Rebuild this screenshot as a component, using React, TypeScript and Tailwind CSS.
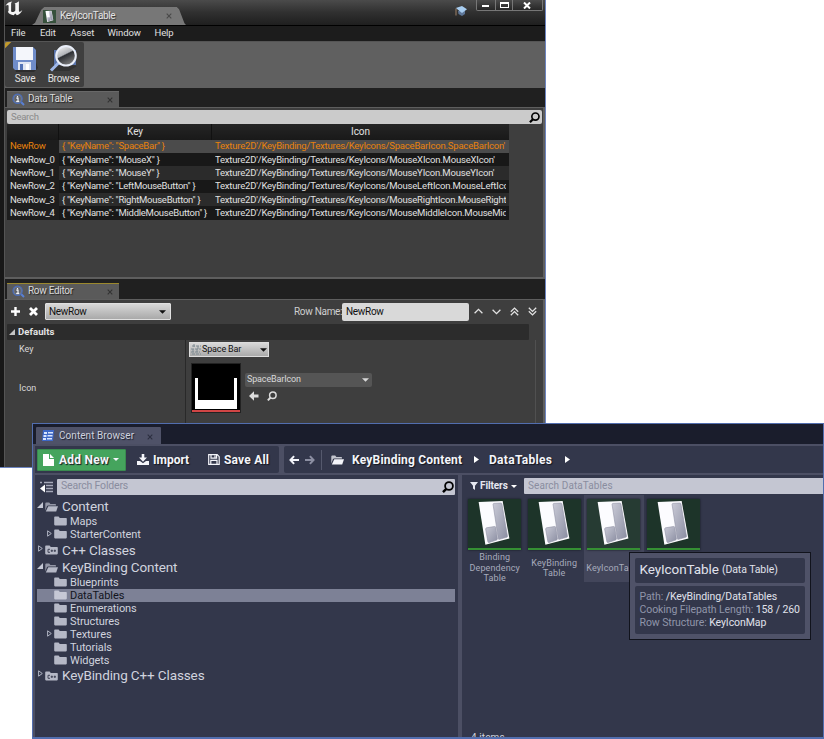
import React from "react";

type IconProps = { className?: string };

function UnrealLogo() {
  return (
    <svg className="h-[16px] w-[19px]" viewBox="0 0 19 16" fill="#f4f4f4">
      <path d="M0.5 5.8C1.8 3.2 4 1.8 7.3 1.4C6.4 2.2 6.1 2.9 6.1 4V10.6C6.1 11.6 6.6 12.1 7.4 12.1C8.4 12.1 9.6 11.4 10.3 10.5V4.6C10.3 3.9 9.9 3.5 9.1 3.5C10.7 3.2 12.6 2.4 13.9 1.3V10.4C13.9 11.4 14.3 11.9 15 11.7C15.8 11.5 16.6 11 17.3 10.1C16.4 12.8 14.6 14.6 11.9 15.2L10.2 13.5L8.7 15.3C5.7 15.1 3.6 13.8 2.8 11.6C3.3 11.7 3.6 11.3 3.6 10.6V5.8C3.6 4.6 2 4.6 0.5 5.8Z" />
    </svg>
  );
}

function TableGlyph({ className }: IconProps) {
  return (
    <svg className={className} viewBox="0 0 53 51">
      <defs>
        <linearGradient id="slab" x1="0" y1="0" x2="1" y2="1">
          <stop offset="0" stopColor="#c9cad6" />
          <stop offset="1" stopColor="#8b8ea2" />
        </linearGradient>
      </defs>
      <path d="M11 4L35.5 2L42 41L18 47.5Z" fill="#17221d" opacity=".6" />
      <path d="M10 3.2L35 2.2L42 41L17 47.5Z" fill="#fcfcff" />
      <path d="M25 5.5Q25 4.7 26 4.6L33 4.2Q34 4.2 34.2 5L40 38.6Q40.1 39.6 39.3 39.8L31.5 42Q30.6 42.2 30.4 41.2Z" fill="url(#slab)" stroke="#8d90a3" strokeWidth=".6" />
      <path d="M17.3 31.5Q17.2 30.3 18.2 30L26.5 28.6Q27.6 28.5 27.8 29.5L29.5 41.2Q29.6 42.3 28.7 42.7L21 45.3Q19.9 45.5 19.6 44.4Z" fill="url(#slab)" stroke="#8d90a3" strokeWidth=".6" />
    </svg>
  );
}

function InfoLens() {
  return (
    <svg className="h-[13px] w-[13px] shrink-0" viewBox="0 0 13 13">
      <path d="M8.8 8.8L12 12" stroke="#5a80d2" strokeWidth="2" />
      <circle cx="5.6" cy="5.8" r="4.6" fill="#7c8088" stroke="#4a6cb8" strokeWidth="1.3" />
      <circle cx="5.6" cy="5.8" r="3.2" fill="#5c6068" />
      <path d="M4.3 5.2H6V8.3M4.2 8.4H7.2M5.5 2.9V4.2" stroke="#f0f2f6" strokeWidth="1.2" fill="none" />
    </svg>
  );
}

function Lens({ className }: IconProps) {
  return (
    <svg className={className} viewBox="0 0 12 12" fill="none" stroke="currentColor" strokeWidth="1.8">
      <circle cx="7" cy="5" r="3.9" />
      <path d="M4.3 7.8L1 11.2" strokeWidth="2.4" />
    </svg>
  );
}

function Caret({ className }: IconProps) {
  return (
    <svg className={className} viewBox="0 0 8 4" fill="currentColor">
      <path d="M0 0H8L4 4Z" />
    </svg>
  );
}

function CloseX({ className }: IconProps) {
  return (
    <svg className={className} viewBox="0 0 6 6" fill="none" stroke="currentColor" strokeWidth="1.1">
      <path d="M.7 .7L5.3 5.3M5.3 .7L.7 5.3" />
    </svg>
  );
}

function ArrowLeft({ className }: IconProps) {
  return (
    <svg className={className} viewBox="0 0 11 10" fill="none" stroke="currentColor" strokeWidth="2.2">
      <path d="M5.6 .7L1.6 5L5.6 9.3M1.8 5H11" />
    </svg>
  );
}

function FolderIcon({ open, cpp, className }: { open?: boolean; cpp?: boolean; className?: string }) {
  return (
    <svg className={`h-[10px] w-[13px] shrink-0 ${className ?? ""}`} viewBox="0 0 13 10" fill="currentColor">
      {open ? (
        <>
          <path d="M.3 8.5V1.6Q.3 .6 1.3 .6H4.2L5.4 1.9H10.2Q11 1.9 11 2.7V3.4H3.2Q2.4 3.4 2 4.1Z" opacity=".75" />
          <path d="M3.3 4.2H13L11.2 9.4H.8Z" />
        </>
      ) : (
        <path d="M.2 1.3Q.2 .6 1 .6H4.6L5.8 1.9H12Q12.8 1.9 12.8 2.6V8.6Q12.8 9.4 12 9.4H1Q.2 9.4 .2 8.6Z" />
      )}
      {cpp && (
        <path d="M5 4.3H3V7.3H5M5.7 5.8H8M6.85 4.6V7M8.7 5.8H11M9.85 4.6V7" fill="none" stroke="#33374b" strokeWidth=".9" />
      )}
    </svg>
  );
}

function Chevron({ flip, twice }: { flip?: boolean; twice?: boolean }) {
  return (
    <svg className={`h-[9px] w-[9px] ${flip ? "rotate-180" : ""}`} viewBox="0 0 9 9" fill="none" stroke="#e2e2e2" strokeWidth="1.3">
      {twice ? <path d="M.8 4.8L4.5 1.1L8.2 4.8M.8 8.3L4.5 4.6L8.2 8.3" /> : <path d="M.6 6.3L4.5 2.4L8.4 6.3" />}
    </svg>
  );
}

function MenuBar() {
  return (
    <div className="flex h-[16px] items-center border-t border-black bg-[#1c1c1c] pl-[6px] text-[9.5px] tracking-[-.1px] text-[#e0e0e0]">
      <span className="w-[29px]">File</span>
      <span className="w-[30.5px]">Edit</span>
      <span className="w-[37px]">Asset</span>
      <span className="w-[47px]">Window</span>
      <span>Help</span>
    </div>
  );
}

function TitleBar() {
  return (
    <div className="flex h-[25px] bg-linear-to-b from-[#4b4b4b] via-[#303030] to-[#1f1f1f]">
      <div className="w-[27px] shrink-0"><UnrealLogo /></div>
      <div className="mt-[7px] h-[18px] w-[154px] bg-[#777] pl-[11px] [clip-path:polygon(0_100%,2%_88%,6%_15%,8%_0,94%_0,95.5%_12%,99%_90%,100%_100%)]">
        <div className="flex h-[18px] items-center">
          <div className="h-[13px] w-[13px] bg-[#36513c]"><TableGlyph className="h-[13px] w-[13px]" /></div>
          <span className="ml-[4px] w-[106px] pb-px text-[10px] tracking-[-.35px] text-[#e4e4e4] [text-shadow:1px_1px_1px_#333]">KeyIconTable</span>
          <CloseX className="h-[6px] w-[6px] text-[#494949]" />
        </div>
      </div>
      <div className="grow" />
      <svg className="mt-[5px] mr-[8px] h-[13px] w-[13px]" viewBox="0 0 13 13">
        <path d="M3 6L10 6V9L7 11L3.5 9Z" fill="#5e7799" />
        <path d="M.8 3L7 1L12 4.2L7 8Z" fill="#a8cdf0" />
        <path d="M1 3.5V10.5" stroke="#87705c" strokeWidth="1.3" />
      </svg>
      <div className="mr-[2px] flex h-[11px] w-[67px] rounded-b-[2px] border-x border-b border-[#777] bg-linear-to-b from-[#4a4a4a] to-[#272727] text-white">
        <div className="flex w-[19px] items-center justify-center border-r border-[#777] pr-[2px]"><i className="mt-px h-[2px] w-[7px] bg-white" /></div>
        <div className="flex w-[17px] items-center justify-center border-r border-[#777]"><i className="h-[6px] w-[9px] border border-t-2 border-white" /></div>
        <div className="flex grow items-center justify-center pr-[2px]">
          <svg className="h-[7px] w-[8px]" viewBox="0 0 8 7" stroke="white" strokeWidth="2"><path d="M1 .5L7 6.5M7 .5L1 6.5" /></svg>
        </div>
      </div>
    </div>
  );
}

function Toolbar() {
  return (
    <div className="flex h-[47px] border-t border-[#555] bg-[#606060]">
      <div className="flex h-[45px] w-[79px] rounded-[2px] bg-[#3f3f3f] bg-linear-[135deg,#c19a2c_4px,#3f3f3f_5px] text-[10px] tracking-[-.25px] text-[#e2e2e2]">
        <div className="flex w-[40px] flex-col items-center pt-[4px]">
          <svg className="h-[27px] w-[26px]" viewBox="0 0 26 27">
            <path d="M3 22L20 4L26 22L22 26H4Z" fill="#1c1c1c" opacity=".5" />
            <path d="M1 1H21L24 4V24H3L1 22Z" fill="#6f8cc9" />
            <path d="M4 1H21V14H4Z" fill="#f4f6fb" />
            <path d="M6 16H19V24H6Z" fill="#dfe5f2" />
            <path d="M8 18H11V24H8Z" fill="#5373b6" />
            <path d="M14 18H17V24H14Z" fill="#fff" />
          </svg>
          <span className="leading-[12px]">Save</span>
        </div>
        <div className="flex w-[37px] flex-col items-center pt-[2px]">
          <svg className="h-[29px] w-[29px]" viewBox="0 0 29 29">
            <defs>
              <linearGradient id="glass" x1="0" y1="0" x2=".5" y2="1">
                <stop offset="0" stopColor="#fff" /><stop offset=".5" stopColor="#b0b3b8" /><stop offset=".56" stopColor="#2c2f34" /><stop offset="1" stopColor="#777" />
              </linearGradient>
            </defs>
            <path d="M4 6H16V20L28 22L20 27H5Z" fill="#252525" opacity=".5" />
            <path d="M5 6H27V21H5Z" fill="#5a74ab" />
            <path d="M9.5 19L2 26.5" stroke="#9fb8ea" strokeWidth="3" />
            <circle cx="17" cy="11.8" r="9.8" fill="url(#glass)" stroke="#e9eef8" strokeWidth="2" />
          </svg>
          <span className="leading-[12px]">Browse</span>
        </div>
      </div>
    </div>
  );
}

function DockTab({ label, active }: { label: string; active?: boolean }) {
  return (
    <div className={`ml-[2px] flex h-[16px] w-[112px] items-center border-t bg-[#5a5a5a] pl-[5px] ${active ? "border-[#9b882d]" : "border-[#686868]"}`}>
      <InfoLens />
      <span className="ml-[3px] w-[79px] pb-[2px] text-[10px] tracking-[-.3px] text-[#dadada] [text-shadow:1px_1px_1px_#222]">{label}</span>
      <CloseX className="h-[6px] w-[6px] shrink-0 text-[#333]" />
    </div>
  );
}

const rows = [
  ["NewRow", "SpaceBar", "SpaceBarIcon.SpaceBarIcon'"],
  ["NewRow_0", "MouseX", "MouseXIcon.MouseXIcon'"],
  ["NewRow_1", "MouseY", "MouseYIcon.MouseYIcon'"],
  ["NewRow_2", "LeftMouseButton", "MouseLeftIcon.MouseLeftIcon'"],
  ["NewRow_3", "RightMouseButton", "MouseRightIcon.MouseRightIcon'"],
  ["NewRow_4", "MiddleMouseButton", "MouseMiddleIcon.MouseMiddleIcon'"],
];

function DataTable() {
  return (
    <div className="h-[172px] border-t border-r-2 border-b-2 border-[#5e5e5e] bg-[#3e3e3e] pt-[2px] pl-[2px]">
      <div className="mr-px flex h-[14px] items-center rounded-[2px] bg-[#cbcbcb] pr-[2px] pl-[4px]">
        <span className="grow text-[9.5px] tracking-[-.25px] text-[#8a8a8a]">Search</span>
        <Lens className="h-[11px] w-[11px] text-black" />
      </div>
      <div className="w-[502px] text-[9.5px] text-[#e0e0e0]">
        <div className="flex h-[15.8px] items-center bg-linear-to-b from-[#252525] to-[#191919] text-center text-[10px] tracking-[-.1px]">
          <span className="h-full w-[52px] border-r border-[#111]" />
          <span className="h-full w-[153px] border-r border-[#111] leading-[16px]">Key</span>
          <span className="h-full grow leading-[16px]">Icon</span>
        </div>
        {rows.map(([name, key, icon], i) => (
          <div key={name} className={`flex h-[13.33px] items-center whitespace-pre ${i === 0 ? "text-[#e8820c]" : ""}`}>
            <span className="flex h-full w-[52px] items-center bg-[#1d1d1d] pl-[3px] tracking-[-.3px]">{name}</span>
            <div className={`flex h-full w-[450px] items-center ${i === 0 ? "bg-[#4b4b4b]" : i % 2 ? "bg-[#181818]" : "bg-[#2b2b2b]"}`}>
              <span className="w-[156px] pl-[3px] tracking-[-.25px]">{`{ "KeyName": "${key}" }`}</span>
              <span className="w-[291px] overflow-hidden tracking-[-.2px]">{`Texture2D'/KeyBinding/Textures/KeyIcons/${icon}`}</span>
            </div>
          </div>
        ))}
      </div>
    </div>
  );
}

function RowEditor() {
  return (
    <div className="flex grow flex-col border-t border-r-2 border-[#5e5e5e] bg-[#3e3e3e] pl-[2px]">
      <div className="flex h-[24px] items-center pb-px pl-[4px] text-[10px] tracking-[-.3px]">
        <svg className="h-[9px] w-[9px]" viewBox="0 0 9 9" stroke="white" strokeWidth="2.4"><path d="M4.5 0V9M0 4.5H9" /></svg>
        <svg className="ml-[9px] h-[9px] w-[9px]" viewBox="0 0 9 9" stroke="white" strokeWidth="2.8"><path d="M1 1L8 8M8 1L1 8" /></svg>
        <div className="ml-[7px] flex h-[17px] w-[126px] items-center rounded-[1px] border border-[#e0e0e0] bg-linear-to-b from-[#d8d8d8] to-[#a9a9a9] pl-[3px] text-[#111]">
          <span className="w-[110px]">NewRow</span>
          <Caret className="h-[4px] w-[7px]" />
        </div>
        <span className="ml-[123px] w-[48px] shrink-0 whitespace-nowrap text-[#cfcfcf]">Row Name:</span>
        <div className="flex h-[18px] w-[127px] shrink-0 items-center rounded-[2px] bg-[#d9d9d9] pl-[4px] text-[#111]">NewRow</div>
        <div className="ml-[5px] flex gap-[9px]">
          <Chevron /><Chevron flip /><Chevron twice /><Chevron twice flip />
        </div>
      </div>
      <div className="flex h-[16px] w-[522px] items-center rounded-[1px] bg-[#2c2c2c] text-[9.5px] font-bold tracking-[.1px] text-[#e4e4e4]">
        <svg className="mr-[3px] mb-px ml-[2px] h-[6px] w-[6px]" viewBox="0 0 6 6" fill="#c4c4c4"><path d="M6 0V6H0Z" /></svg>
        Defaults
      </div>
      <div className="flex grow text-[9px] text-[#d8d8d8]">
        <div className="w-[179px] border-r border-[#292929] pt-[3px] pl-[12px]">
          <div className="h-[39px] leading-[12px]">Key</div>
          <div className="leading-[12px]">Icon</div>
        </div>
        <div className="w-[344px] pt-[2px] pl-[3px]">
          <div className="flex h-[15px] w-[80px] items-center border border-[#ddd] bg-linear-to-b from-[#d9d9d9] to-[#aaa] tracking-[-.15px] text-[#111]">
            <svg className="h-[12px] w-[12px]" viewBox="0 0 12 12" fill="none" stroke="#7f8b92">
              <path d="M2 2H11M1 5H11M1 8H10M4 0V4M8 2V5M3 5V8M7 5V8M2 10H11" strokeDasharray="3 1" />
            </svg>
            <span className="w-[58px]">Space Bar</span>
            <Caret className="h-[4px] w-[7px] shrink-0" />
          </div>
          <div className="mt-[6px] ml-[2px] flex">
            <div className="flex h-[50px] w-[50px] flex-col border border-[#222] bg-black">
              <div className="flex grow items-end px-[3px] pt-[14px]">
                <div className="h-[31px] w-full border-x-[3px] border-b-[9px] border-white" />
              </div>
              <div className="mt-px h-[2px] bg-[#d04545]" />
            </div>
            <div className="ml-[4px] pt-[10px]">
              <div className="flex h-[14px] w-[127px] items-center rounded-[2px] bg-[#555] pl-[2px] tracking-[-.15px]">
                <span className="w-[115px]">SpaceBarIcon</span>
                <Caret className="h-[4px] w-[7px] shrink-0" />
              </div>
              <div className="mt-[4px] ml-[4px] flex items-center gap-[8px] text-[#ddd]">
                <svg className="h-[10px] w-[10px]" viewBox="0 0 10 10" fill="currentColor"><path d="M0 5L5 .3V3.4H9.5V6.6H5V9.7Z" /></svg>
                <Lens className="h-[10px] w-[10px]" />
              </div>
            </div>
          </div>
        </div>
        <div className="ml-[5px] w-px bg-[#505050]" />
      </div>
    </div>
  );
}

function AssetEditor() {
  return (
    <div className="absolute top-0 left-0 flex h-[468px] w-[546px] flex-col border-r border-b border-[#6c84c0] bg-[#202020] pl-[4px] shadow-[inset_4px_0_0_#181818,inset_5px_0_0_#555]">
      <div className="pl-px">
        <TitleBar />
        <MenuBar />
        <Toolbar />
        <div className="flex h-[19px] items-end"><DockTab label="Data Table" /></div>
        <DataTable />
        <div className="flex h-[20px] items-end"><DockTab label="Row Editor" active /></div>
      </div>
      <div className="flex grow pl-px"><RowEditor /></div>
    </div>
  );
}

type Node = { label: string; level: 0 | 1; open?: boolean; branch?: boolean; cpp?: boolean; selected?: boolean; h: string };
const tree: Node[] = [
  { label: "Content", level: 0, open: true, h: "h-[17px]" },
  { label: "Maps", level: 1, h: "h-[13px]" },
  { label: "StarterContent", level: 1, branch: true, h: "h-[13px]" },
  { label: "C++ Classes", level: 0, branch: true, cpp: true, h: "h-[18px]" },
  { label: "KeyBinding Content", level: 0, open: true, h: "h-[17px]" },
  { label: "Blueprints", level: 1, h: "h-[13px]" },
  { label: "DataTables", level: 1, selected: true, h: "h-[13px]" },
  { label: "Enumerations", level: 1, h: "h-[13px]" },
  { label: "Structures", level: 1, h: "h-[13px]" },
  { label: "Textures", level: 1, branch: true, h: "h-[13px]" },
  { label: "Tutorials", level: 1, h: "h-[13px]" },
  { label: "Widgets", level: 1, h: "h-[13px]" },
  { label: "KeyBinding C++ Classes", level: 0, branch: true, cpp: true, h: "h-[17px]" },
];

function TreeRow({ label, level, open, branch, cpp, selected, h }: Node) {
  return (
    <div className={`flex items-center ${h} ${level ? "pl-[9px]" : ""} ${selected ? "bg-[#7d8196] text-[#12141d]" : "text-[#d0d3de]"}`}>
      <span className={`flex w-[8px] shrink-0 ${level ? "pb-[3px]" : "pb-[4px]"}`}>
        {open && <svg className="h-[6px] w-[6px]" viewBox="0 0 6 6" fill="#c4c7d4"><path d="M6 0V6H0Z" /></svg>}
        {branch && <svg className="ml-px h-[7px] w-[5px]" viewBox="0 0 5 7" fill="none" stroke="#aeb2c2"><path d="M.6 .8L4.3 3.5L.6 6.2Z" /></svg>}
      </span>
      <FolderIcon open={open} cpp={cpp} className={`${level ? "mb-px" : ""} ${selected ? "text-[#c6c8d5]" : "text-[#b5b8c6]"}`} />
      <span className={level ? "ml-[3px] text-[11px] leading-[13px] tracking-[-.08px]" : "ml-[4px] text-[13.5px] tracking-[-.12px]"}>{label}</span>
    </div>
  );
}

function ContentToolbar() {
  return (
    <div className="flex h-[27px] gap-[5px] text-[12px] font-bold text-[#f4f5fa] [text-shadow:1px_1px_1px_#14161f]">
      <div className="flex w-[244px] items-center rounded-r-[2px] bg-[#33374b] pl-[2px]">
        <div className="flex h-[22px] w-[89px] items-center rounded-[1px] border border-[#3a8b50] bg-[#45a45d] pl-[5px]">
          <svg className="h-[12px] w-[11px]" viewBox="0 0 11 12" fill="white"><path d="M0 0H6V5H11V12H0ZM7 0L11 4H7Z" /></svg>
          <span className="ml-[5px] w-[54px] tracking-[.25px] whitespace-nowrap">Add New</span>
          <Caret className="h-[3px] w-[6px]" />
        </div>
        <svg className="ml-[11px] h-[11px] w-[12px]" viewBox="0 0 12 11" fill="currentColor"><path d="M4.7 0H7.3V3.5H10L6 7.7L2 3.5H4.7ZM0 7H3L6 9.3L9 7H12V11H0Z" /></svg>
        <span className="ml-[4px] w-[55px]">Import</span>
        <svg className="h-[11px] w-[12px]" viewBox="0 0 12 11" fill="none" stroke="currentColor" strokeWidth="1.2"><path d="M.7 .7H9.2L11.2 2.7V10.3H.7ZM3 .8V4.2H8.6V.8M2.8 10V6.4H9V10M7 1.6V3.4" /></svg>
        <span className="ml-[4px] tracking-[.2px]">Save All</span>
      </div>
      <div className="flex grow items-center rounded-l-[2px] bg-[#33374b] pl-[5px]">
        <ArrowLeft className="h-[10px] w-[10px]" />
        <ArrowLeft className="ml-[6px] h-[10px] w-[10px] rotate-180 text-[#8c8fa2]" />
        <i className="ml-[6px] h-[20px] w-px bg-[#55596d]" />
        <FolderIcon open className="ml-[9px]" />
        <span className="ml-[8px] w-[122px] tracking-[.2px] whitespace-nowrap">KeyBinding Content</span>
        <svg className="h-[7px] w-[5px]" viewBox="0 0 5 7" fill="white"><path d="M0 0L5 3.5L0 7Z" /></svg>
        <span className="ml-[10px] w-[76px] tracking-[.3px]">DataTables</span>
        <svg className="h-[7px] w-[5px]" viewBox="0 0 5 7" fill="white"><path d="M0 0L5 3.5L0 7Z" /></svg>
      </div>
    </div>
  );
}

const assets = [
  { lines: ["Binding", "Dependency", "Table"] },
  { lines: ["KeyBinding", "Table"] },
  { lines: ["KeyIconTable"], hover: true },
  { lines: [] },
];

function AssetCard({ lines, hover }: { lines: string[]; hover?: boolean }) {
  return (
    <div className={`flex h-[87px] w-[59.5px] shrink-0 flex-col items-center pt-[4px] ${hover ? "bg-[#43465b]" : ""}`}>
      <div className={`h-[51px] w-[53px] shrink-0 border-b-2 border-[#359033] shadow-[0_0_2px_#151821] ${hover ? "bg-[#263b33]" : "bg-[#1d3429]"}`}>
        <TableGlyph className="h-[49px] w-[53px]" />
      </div>
      <div className="mt-[2px] flex h-[32px] shrink-0 flex-col items-center justify-center text-[9px] leading-[10.5px] tracking-[.12px] text-[#a7abbc]">
        {lines.map((l) => <span key={l}>{l}</span>)}
      </div>
    </div>
  );
}

function Tooltip() {
  return (
    <div className="absolute top-[128px] left-[596px] flex h-[88px] w-[182px] flex-col gap-[3px] border border-[#11131c] bg-[#4f5268] p-[5px] text-[#e0e2ec]">
      <div className="flex h-[25px] items-center rounded-[2px] bg-[#33374b] pb-[2px] pl-[4.5px] whitespace-nowrap">
        <span className="text-[13.5px] tracking-[-.08px]">KeyIconTable</span>
        <span className="mt-px ml-[3px] text-[10.5px] tracking-[-.08px]">(Data Table)</span>
      </div>
      <div className="flex grow flex-col justify-center rounded-[2px] bg-[#33374b] pb-px pl-[4.5px] text-[10.5px] leading-[13px] tracking-[-.08px] whitespace-nowrap">
        <div><span className="text-[#9095a9]">Path: </span>/KeyBinding/DataTables</div>
        <div><span className="text-[#9095a9]">Cooking Filepath Length: </span>158 / 260</div>
        <div><span className="text-[#9095a9]">Row Structure: </span>KeyIconMap</div>
      </div>
    </div>
  );
}

function ContentBrowser() {
  return (
    <div className="absolute top-[423px] left-[32px] flex h-[316px] w-[792px] flex-col border border-b-2 border-[#526eaf] bg-[#4c4f64]">
      <div className="flex h-[21px] shrink-0 items-end border-b border-[#4c4f64] bg-[#1a1d2c]">
        <div className="ml-[3px] flex h-[17px] w-[125px] items-center rounded-t-[1px] bg-[#4f5268] pl-[6px]">
          <svg className="h-[11px] w-[12px]" viewBox="0 0 12 11">
            <path d="M1 0H12L11 11H0Z" fill="#3e68c8" />
            <path d="M2 2H5V4H2ZM6 2H11V3.5H6ZM1.5 5H4.5V7H1.5ZM5.5 5H10.5V6.5H5.5ZM1 8H4V10H1ZM5 8H10V9.5H5Z" fill="#d9e5ff" />
          </svg>
          <span className="ml-[5px] w-[88px] text-[10px] tracking-[.06px] whitespace-nowrap text-[#cfd2de] [text-shadow:1px_1px_1px_#1d2030]">Content Browser</span>
          <CloseX className="mt-[2px] h-[6px] w-[6px] shrink-0 text-[#2c2f40]" />
        </div>
      </div>
      <div className="shrink-0 pt-px pl-[2px]"><ContentToolbar /></div>
      <div className="mt-[2px] flex min-h-0 grow gap-[4px] pl-[2px]">
        <div className="w-[423px] shrink-0 bg-[#33374b] pt-[3px]">
          <div className="flex h-[17px] items-center pr-[3px] pl-[5px]">
            <svg className="h-[12px] w-[13px]" viewBox="0 0 13 12" fill="none" stroke="#a6a9b9" strokeWidth="1.4">
              <path d="M0 1.5H2M4 1.5H13M6 4.5H13M6 7.5H13M6 10.5H13" /><path d="M0 7.5L5 3.5V11.5Z" fill="white" stroke="none" />
            </svg>
            <div className="ml-[4px] flex h-[16px] grow items-center rounded-[1px] bg-[#c4c6d2] pr-[1px] pl-[4px]">
              <span className="grow pb-px text-[10.5px] tracking-[-.18px] text-[#8a8d9f]">Search Folders</span>
              <Lens className="h-[12px] w-[12px] text-black" />
            </div>
          </div>
          <div className="mr-[3px] ml-[2px] pt-[3px]">{tree.map((n) => <TreeRow key={n.label} {...n} />)}</div>
        </div>
        <div className="flex min-w-0 grow flex-col bg-[#33374b] pt-[3px]">
          <div className="flex h-[16px] shrink-0 items-center pl-[8px]">
            <svg className="h-[8px] w-[8px]" viewBox="0 0 8 8" fill="#e6e8f0"><path d="M0 0H8L5 3.8V8L3 6.5V3.8Z" /></svg>
            <span className="ml-[2px] w-[31px] pb-px text-[10px] font-bold tracking-[-.1px] text-[#e6e8f0]">Filters</span>
            <Caret className="h-[3px] w-[6px] text-white" />
            <div className="ml-[7px] flex h-[16px] grow items-center rounded-l-[1px] bg-[#c4c6d2] pb-px pl-[4px] text-[10px] tracking-[.08px] text-[#8a8d9f]">Search DataTables</div>
          </div>
          <div className="mt-px ml-[3px] flex">{assets.map((a, i) => <AssetCard key={i} {...a} />)}</div>
          <div className="mt-auto h-[4px] shrink-0 overflow-hidden pl-[9px] text-[10px] leading-[10px] tracking-[.1px] text-[#d0d3de]">4 items</div>
        </div>
      </div>
      <Tooltip />
    </div>
  );
}

export default function App() {
  return (
    <div className="relative h-[739px] w-[824px] overflow-hidden bg-white font-['Roboto',sans-serif]">
      <AssetEditor />
      <ContentBrowser />
    </div>
  );
}
